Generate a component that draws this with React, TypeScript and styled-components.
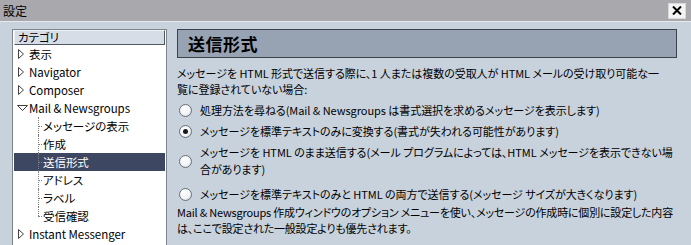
import React from "react";
import styled, { createGlobalStyle } from "styled-components";

const Global = createGlobalStyle`
  html, body { margin: 0; padding: 0; background: #c8d2dc; }
  body {
    font-family: "Noto Sans CJK JP", "Liberation Sans", sans-serif;
    font-size: 11px;
    letter-spacing: -0.05px;
    font-feature-settings: "palt";
  }
`;

const Window = styled.div`
  width: 691px;
  height: 245px;
  display: flex;
  flex-direction: column;
  overflow: hidden;
  background: #c8d2dc;
  color: #000;
`;

const TitleBar = styled.div`
  height: 21px;
  flex: none;
  box-sizing: border-box;
  display: flex;
  align-items: center;
  justify-content: space-between;
  padding: 0 5px 0 3px;
  background: #a9a8ad;
  font-size: 12px;
`;

const TitleRule = styled.div`
  height: 1px;
  flex: none;
  background: #e6eaee;
`;

const CloseButton = styled.div`
  width: 16px;
  height: 14px;
  background: #f4f4f4;
  border: 1px solid #d8d8d8;
  display: flex;
  align-items: center;
  justify-content: center;
`;

const Body = styled.div`
  flex: 1;
  display: flex;
  gap: 10px;
  padding: 7px 14px 0 12px;
  min-height: 0;
`;

const Tree = styled.div`
  width: 155px;
  flex: none;
  box-sizing: border-box;
  background: #fff;
  border: 1px solid #7c848c;
  border-bottom: none;
  padding: 0 1px;
  display: flex;
  flex-direction: column;
  font-size: 11.5px;
`;

const TreeHeader = styled.div`
  height: 13px;
  line-height: 13px;
  padding-left: 3px;
  background: #d6dde6;
  border: 1px solid #505860;
  border-top-color: #f0f0f0;
  border-left-color: #f0f0f0;
`;

const Row = styled.div<{ $selected?: boolean }>`
  height: 18px;
  flex: none;
  display: flex;
  align-items: center;
  white-space: nowrap;
  background: ${(p) => (p.$selected ? "#3e4762" : "transparent")};
  color: ${(p) => (p.$selected ? "#fff" : "#000")};
`;

const Twisty = styled.span`
  width: 12px;
  margin-left: 3px;
  flex: none;
  display: flex;
  align-items: center;
`;

const Branch = styled.span<{ $last?: boolean }>`
  position: relative;
  width: 29px;
  flex: none;
  height: 18px;
  &::before {
    content: "";
    position: absolute;
    left: 24px;
    top: 0;
    height: ${(p) => (p.$last ? "9px" : "18px")};
    border-left: 1px dotted #808080;
  }
  &::after {
    content: "";
    position: absolute;
    left: 24px;
    top: 9px;
    width: 4px;
    border-top: 1px dotted #808080;
  }
`;

const Content = styled.div`
  flex: 1;
  display: flex;
  flex-direction: column;
`;

const PanelHeader = styled.div`
  height: 27px;
  flex: none;
  display: flex;
  align-items: center;
  padding-left: 10px;
  background: #97a3b3;
  border: 1px solid #3a424c;
  font-size: 17px;
  font-weight: bold;
  letter-spacing: 0.5px;
  margin-bottom: 7px;
`;

const Para = styled.div`
  line-height: 16px;
  white-space: nowrap;
`;

const FootNote = styled(Para)`
  letter-spacing: -0.2px;
`;

const RadioList = styled.div`
  display: flex;
  flex-direction: column;
  margin: 3px 0 -1px 2px;
`;

const RadioRow = styled.div<{ $multi?: boolean }>`
  display: flex;
  align-items: center;
  gap: 8px;
  padding: ${(p) => (p.$multi ? "2px 0 6px" : "2px 0")};
`;

const RadioCircle = styled.span<{ $checked?: boolean }>`
  width: 11px;
  height: 11px;
  flex: none;
  border-radius: 50%;
  border: 1px solid #6a7078;
  background: radial-gradient(circle at 40% 35%, #ffffff 0%, #f2f4f6 55%, #c8ced6 100%);
  display: flex;
  align-items: center;
  justify-content: center;
  &::after {
    content: "";
    width: 5px;
    height: 5px;
    border-radius: 50%;
    background: ${(p) => (p.$checked ? "#1a1a1a" : "transparent")};
  }
`;

const RadioLabel = styled.div`
  line-height: 17px;
  white-space: nowrap;
`;

const TriangleRight = () => (
  <svg width="8" height="10" viewBox="0 0 8 10">
    <path d="M1.5 0.5 L6.5 5 L1.5 9.5 Z" fill="#fff" stroke="#404040" strokeWidth="1" />
  </svg>
);

const TriangleDown = () => (
  <svg width="11" height="8" viewBox="0 0 11 8">
    <path d="M0.5 1.5 L10.5 1.5 L5.5 6.5 Z" fill="#fff" stroke="#404040" strokeWidth="1" />
  </svg>
);

type Node = { label: string; kind: "closed" | "open" | "child"; selected?: boolean; last?: boolean };

const nodes: Node[] = [
  { label: "表示", kind: "closed" },
  { label: "Navigator", kind: "closed" },
  { label: "Composer", kind: "closed" },
  { label: "Mail & Newsgroups", kind: "open" },
  { label: "メッセージの表示", kind: "child" },
  { label: "作成", kind: "child" },
  { label: "送信形式", kind: "child", selected: true },
  { label: "アドレス", kind: "child" },
  { label: "ラベル", kind: "child" },
  { label: "受信確認", kind: "child", last: true },
  { label: "Instant Messenger", kind: "closed" },
];

const options = [
  { text: ["処理方法を尋ねる(Mail & Newsgroups は書式選択を求めるメッセージを表示します)"] },
  { text: ["メッセージを標準テキストのみに変換する(書式が失われる可能性があります)"], checked: true },
  {
    text: [
      "メッセージを HTML のまま送信する(メール プログラムによっては、HTML メッセージを表示できない場",
      "合があります)",
    ],
  },
  { text: ["メッセージを標準テキストのみと HTML の両方で送信する(メッセージ サイズが大きくなります)"] },
];

export default function App() {
  return (
    <Window>
      <Global />
      <TitleBar>
        <span>設定</span>
        <CloseButton>
          <svg width="10" height="9" viewBox="0 0 10 9">
            <path d="M1 0.5 L9 8.5 M9 0.5 L1 8.5" stroke="#000" strokeWidth="2" />
          </svg>
        </CloseButton>
      </TitleBar>
      <TitleRule />
      <Body>
        <Tree>
          <TreeHeader>カテゴリ</TreeHeader>
          {nodes.map((n) => (
            <Row key={n.label} $selected={n.selected}>
              {n.kind === "child" ? (
                <Branch $last={n.last} />
              ) : (
                <Twisty>{n.kind === "open" ? <TriangleDown /> : <TriangleRight />}</Twisty>
              )}
              <span>{n.label}</span>
            </Row>
          ))}
        </Tree>
        <Content>
          <PanelHeader>送信形式</PanelHeader>
          <Para>
            メッセージを HTML 形式で送信する際に、1 人または複数の受取人が HTML メールの受け取り可能な一
            <br />
            覧に登録されていない場合:
          </Para>
          <RadioList>
            {options.map((o, i) => (
              <RadioRow key={i} $multi={o.text.length > 1}>
                <RadioCircle $checked={o.checked} />
                <RadioLabel>
                  {o.text.map((t, j) => (
                    <div key={j}>{t}</div>
                  ))}
                </RadioLabel>
              </RadioRow>
            ))}
          </RadioList>
          <FootNote>
            Mail & Newsgroups 作成ウィンドウのオプション メニューを使い、メッセージの作成時に個別に設定した内容
            <br />
            は、ここで設定された一般設定よりも優先されます。
          </FootNote>
        </Content>
      </Body>
    </Window>
  );
}
